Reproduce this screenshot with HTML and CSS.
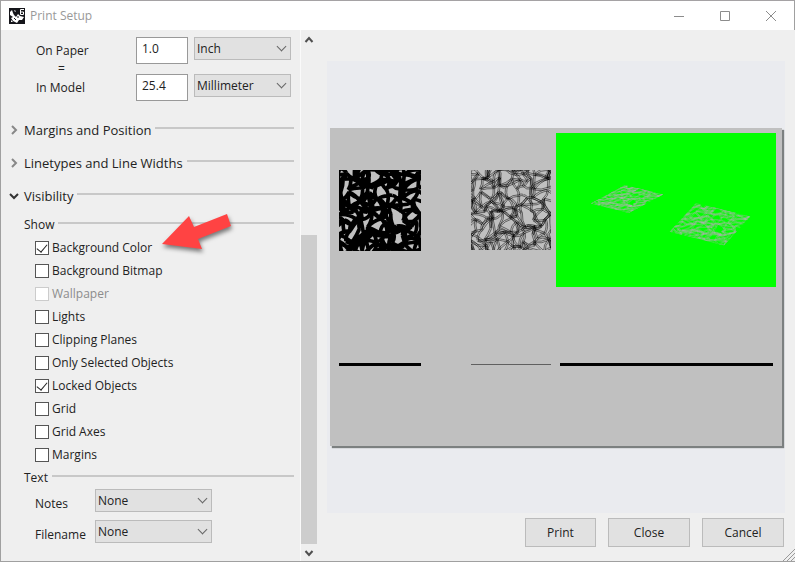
FILE: index.html
```html
<!DOCTYPE html>
<html lang="en">
<head>
  <meta charset="UTF-8">
  <title>Print Setup</title>
  <meta name="viewport" content="width=device-width, initial-scale=1.0">
  <link rel="stylesheet" href="styles.css">
</head>
<body>
  <div class="window">

    <header class="titlebar">
      <svg class="app-icon" viewBox="0 0 16 16" aria-hidden="true">
        <rect width="16" height="16" fill="#15151a"/>
        <path d="M1 4L3 2L4 5L5 7L7 9L9 6L11 8L15 9L13 12L10 12L8 15L4 13L2 10L4 9L1 7Z" fill="#fff"/>
        <path d="M5 2L7 3L6 4ZM2 12L4 14L2 14Z" fill="#fff"/>
        <path d="M5 10L7 12M9 8L9 10" stroke="#15151a"/>
        <path d="M15 1.500H11.500V6.500H14.500V4H12" fill="none" stroke="#fff"/>
      </svg>
      <h1>Print Setup</h1>
      <div class="window-buttons">
        <button aria-label="Minimize"><svg viewBox="0 0 10 10"><path d="M0 5.500H10"/></svg></button>
        <button aria-label="Maximize"><svg viewBox="0 0 10 10"><path d="M.5 .5H9.500V9.500H.5Z"/></svg></button>
        <button aria-label="Close window"><svg viewBox="0 0 10 10"><path d="M0 0L10 10M10 0L0 10"/></svg></button>
      </div>
    </header>

    <main class="content">
      <form class="options">
        <div class="scale">
          <label for="onPaper">On Paper</label>
          <input type="text" id="onPaper" value="1.0">
          <div class="select">
            <select aria-label="Paper unit"><option>Inch</option></select>
          </div>
          <span class="equals">=</span>
          <label for="inModel">In Model</label>
          <input type="text" id="inModel" value="25.4">
          <div class="select">
            <select aria-label="Model unit"><option>Millimeter</option></select>
          </div>
        </div>

        <h2><svg viewBox="0 0 10 10"><path d="M3 1L7 5L3 9"/></svg>Margins and Position</h2>
        <h2><svg viewBox="0 0 10 10"><path d="M3 1L7 5L3 9"/></svg>Linetypes and Line Widths</h2>
        <h2 class="open"><svg viewBox="0 0 10 10"><path d="M1 3L5 7L9 3"/></svg>Visibility</h2>

        <div class="visibility">
          <h3>Show</h3>
          <div class="checks">
            <label><input type="checkbox" checked>Background Color</label>
            <label><input type="checkbox">Background Bitmap</label>
            <label class="disabled"><input type="checkbox" disabled>Wallpaper</label>
            <label><input type="checkbox">Lights</label>
            <label><input type="checkbox">Clipping Planes</label>
            <label><input type="checkbox">Only Selected Objects</label>
            <label><input type="checkbox" checked>Locked Objects</label>
            <label><input type="checkbox">Grid</label>
            <label><input type="checkbox">Grid Axes</label>
            <label><input type="checkbox">Margins</label>
          </div>

          <svg class="arrow" viewBox="0 0 80 50" aria-hidden="true">
            <path d="M2 34L29 6L34 17L67 4L71 16L38 29L42 39Z" fill="#ff4343"/>
          </svg>

          <h3>Text</h3>
          <div class="text-options">
            <label for="notes">Notes</label>
            <div class="select">
              <select id="notes"><option>None</option></select>
            </div>
            <label for="filename">Filename</label>
            <div class="select">
              <select id="filename"><option>None</option></select>
            </div>
          </div>
        </div>
      </form>

      <div class="scrollbar" aria-hidden="true">
        <svg viewBox="0 0 10 10"><path d="M1.500 7L5 3L8.500 7"/></svg>
        <div class="track"><div class="thumb"></div></div>
        <svg viewBox="0 0 10 10"><path d="M1.500 3L5 7L8.500 3"/></svg>
      </div>

      <section class="preview">
        <div class="paper-area">
          <svg class="paper" viewBox="0 0 452 318" role="img" aria-label="Page preview">
            <defs>
              <clipPath id="square"><rect width="80" height="80"/></clipPath>
              <path id="ribbons" fill="none" d=""/>
            </defs>
            <rect width="452" height="318" fill="#c0c0c0"/>
            <svg x="9" y="42" width="82" height="81" viewBox="0 0 80 80" preserveAspectRatio="none">
              <use href="#ribbons" stroke="#000" stroke-width="2"/>
            </svg>
            <svg x="141" y="42" width="80" height="80" viewBox="0 0 80 80">
              <use href="#ribbons" stroke="#000" stroke-width=".5"/>
            </svg>
            <rect x="226" y="5" width="220" height="154" fill="#0f0"/>
            <g stroke="#b4b4b4" stroke-width=".5">
              <g transform="matrix(.48 .12 -.43 .23 295 57)">
                <g clip-path="url(#square)"><use href="#ribbons"/></g>
              </g>
              <g transform="matrix(.68 .17 -.33 .36 366 75)">
                <g clip-path="url(#square)"><use href="#ribbons"/></g>
              </g>
            </g>
            <path d="M9 236.500H91M230 236.500H443" stroke="#000" stroke-width="3"/>
            <path d="M141 236.500H221" stroke="#606060"/>
          </svg>
        </div>
        <div class="actions">
          <button class="print">Print</button>
          <button>Close</button>
          <button>Cancel</button>
        </div>
      </section>
    </main>

    <svg class="grip" viewBox="0 0 12 12" aria-hidden="true"><path d="M0 12L12 0M4 12L12 4M8 12L12 8"/></svg>
  </div>

  <script src="ribbons.js"></script>
</body>
</html>
```

FILE: styles.css
```css
* {
  box-sizing: border-box;
}

body {
  margin: 0;
  font-family: "Open Sans", "Noto Sans", sans-serif;
  font-size: 12px;
  line-height: 16px;
  color: #222;
  background: #efefef;
}

h1, h2, h3 {
  margin: 0;
  font-weight: normal;
}

svg {
  display: block;
}

button, input, select {
  margin: 0;
  font: inherit;
  color: inherit;
  border-radius: 0;
}

.window {
  position: relative;
  display: flex;
  flex-direction: column;
  height: 100vh;
  border-left: 1px solid #a0a0a0;
  border-bottom: 1px solid #a0a0a0;
}

/* title bar */
.titlebar {
  display: flex;
  align-items: center;
  flex: none;
  height: 30px;
  padding-left: 8px;
  background: #fff;
  border-top: 1px solid #a5a2a4;
  border-right: 1px solid #a0a0a0;
}

.app-icon {
  width: 16px;
  height: 16px;
  margin-right: 5px;
}

.titlebar h1 {
  font-size: 12px;
  color: #999;
}

.window-buttons {
  display: flex;
  margin-left: auto;
}

.window-buttons button {
  display: flex;
  align-items: center;
  justify-content: center;
  width: 46px;
  height: 29px;
  padding: 0;
  background: none;
  border: none;
}

.window-buttons svg {
  width: 10px;
  height: 10px;
  fill: none;
  stroke: #8c8c8c;
}

.content {
  display: flex;
  flex: 1;
  min-height: 0;
}

/* left side */
.options {
  flex: none;
  width: 300px;
  padding: 7px 6px 0 8px;
  overflow: hidden;
  border-right: 1px solid #fafafa;
}

.scale {
  display: grid;
  grid-template-columns: 94px 52px 97px;
  column-gap: 6px;
  padding-left: 27px;
  margin-bottom: 12px;
}

.scale label {
  align-self: center;
}

.scale .equals {
  grid-column: 1 / -1;
  height: 10px;
  padding-left: 22px;
  line-height: 10px;
}

.scale input {
  width: 52px;
  height: 27px;
  padding: 0 5px 4px;
  background: #fff;
  border: 1px solid #999;
}

.select {
  position: relative;
  height: 23px;
}

.select select {
  appearance: none;
  width: 100%;
  height: 23px;
  padding: 0 20px 0 2px;
  background: #e1e1e1;
  border: 1px solid #bbb;
}

.select::after {
  content: "";
  position: absolute;
  top: 6px;
  right: 6px;
  width: 6px;
  height: 6px;
  border-right: 1px solid #666;
  border-bottom: 1px solid #666;
  transform: rotate(45deg);
  pointer-events: none;
}

.options h2 {
  display: flex;
  align-items: center;
  height: 33px;
  font-size: 13px;
  line-height: 20px;
}

.options h2 svg {
  width: 10px;
  height: 10px;
  margin-right: 5px;
  fill: none;
  stroke: #888;
  stroke-width: 2;
}

.options h2.open svg {
  stroke: #333;
}

.options h2::after,
.options h3::after {
  content: "";
  flex: 1;
  height: 2px;
  margin: 0 0 4px 4px;
  background: #c8c8c8;
}

.visibility {
  position: relative;
  padding: 1px 0 0 15px;
}

.visibility h3 {
  display: flex;
  align-items: center;
  height: 23px;
  font-size: 12px;
}

.checks {
  padding-left: 11px;
}

.checks label {
  display: flex;
  align-items: center;
  gap: 3px;
  height: 23px;
}

.checks input {
  appearance: none;
  display: flex;
  justify-content: center;
  width: 14px;
  height: 14px;
  background: #fff;
  border: 1px solid #555;
}

.checks input:checked::before {
  content: "";
  width: 5px;
  height: 9px;
  border-right: 1px solid #222;
  border-bottom: 1px solid #222;
  transform: rotate(40deg);
}

.checks .disabled {
  color: #8c8c8c;
}

.checks input:disabled {
  border-color: #ccc;
}

.arrow {
  position: absolute;
  top: -2px;
  left: 151px;
  width: 80px;
  height: 50px;
  filter: drop-shadow(1px 3px 2px rgba(0, 0, 0, 0.5));
}

.text-options {
  display: grid;
  grid-template-columns: 60px 117px;
  row-gap: 8px;
  padding-left: 11px;
}

.text-options label {
  align-self: end;
}

.scrollbar {
  display: flex;
  flex-direction: column;
  align-items: center;
  flex: none;
  width: 16px;
  padding: 5px 0 3px;
}

.scrollbar svg {
  width: 10px;
  height: 10px;
  fill: none;
  stroke: #505050;
  stroke-width: 2;
}

.track {
  display: flex;
  flex-direction: column;
  justify-content: flex-end;
  flex: 1;
  width: 100%;
  margin-bottom: 4px;
}

.thumb {
  height: 62%;
  background: #cdcdcd;
}

/* right side */
.preview {
  display: flex;
  flex-direction: column;
  flex: 1;
  min-width: 0;
  padding: 31px 10px 14px;
}

.paper-area {
  display: flex;
  align-items: center;
  flex: 1;
  padding: 0 3px;
  background: #eaebef;
}

.paper {
  width: 100%;
  box-shadow: 2px 2px 1px #7c8080;
}

.actions {
  display: flex;
  justify-content: flex-end;
  gap: 12px;
  padding: 5px 1px 0 0;
}

.actions button {
  width: 82px;
  height: 29px;
  padding: 0;
  background: #e1e1e1;
  border: 1px solid #bbb;
}

.actions .print {
  width: 71px;
}

.grip {
  position: absolute;
  right: 0;
  bottom: 0;
  width: 12px;
  height: 12px;
  fill: none;
  stroke: #999;
}
```

FILE: ribbons.js
```javascript
// builds the tangled web shared by all the drawings on the page
let seed = 11;

function rnd(min, max) {
  seed = (seed * 16807) % 2147483647;
  return min + (seed / 2147483647) * (max - min);
}

let d = "";

function ribbon(a, b) {
  const dx = b.x - a.x;
  const dy = b.y - a.y;
  const length = Math.hypot(dx, dy) || 1;
  const bend = rnd(-0.3, 0.3);
  // two edges for each ribbon
  for (const side of [-0.8, 0.8]) {
    const ox = (-dy / length) * side;
    const oy = (dx / length) * side;
    d += `M${(a.x + ox).toFixed(1)} ${(a.y + oy).toFixed(1)}`;
    d += `q${(dx / 2 - dy * bend).toFixed(1)} ${(dy / 2 + dx * bend).toFixed(1)} ${dx.toFixed(1)} ${dy.toFixed(1)}`;
  }
}

// loose grid of knots, each tied to some of its neighbours
const size = 15;
const nodes = [];
for (let row = 0; row < size; row++) {
  nodes.push([]);
  for (let col = 0; col < size; col++) {
    nodes[row].push({ x: col * 7 - 10 + rnd(-5, 5), y: row * 7 - 10 + rnd(-5, 5) });
  }
}

for (let row = 0; row < size - 1; row++) {
  for (let col = 1; col < size - 1; col++) {
    const node = nodes[row][col];
    if (rnd(0, 1) < 0.8) ribbon(node, nodes[row][col + 1]);
    if (rnd(0, 1) < 0.8) ribbon(node, nodes[row + 1][col]);
    if (rnd(0, 1) < 0.35) ribbon(node, nodes[row + 1][col + 1]);
    if (rnd(0, 1) < 0.35) ribbon(node, nodes[row + 1][col - 1]);
  }
}

document.getElementById("ribbons").setAttribute("d", d);
```
